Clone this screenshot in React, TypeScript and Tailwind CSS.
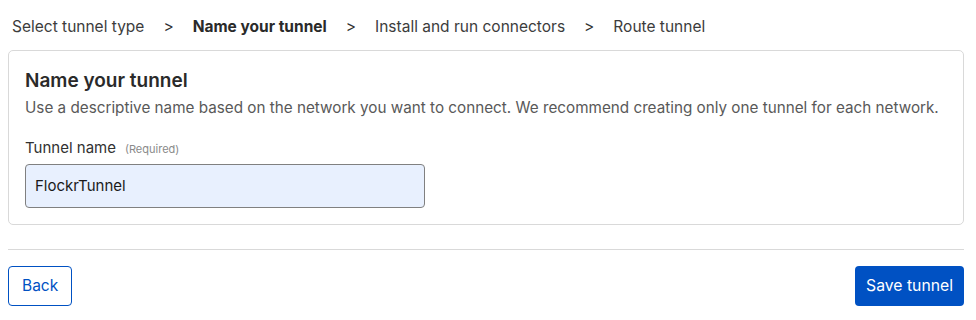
export default function App() {
  const steps = [
    { label: 'Select tunnel type', active: false },
    { label: 'Name your tunnel', active: true },
    { label: 'Install and run connectors', active: false },
    { label: 'Route tunnel', active: false },
  ];

  return (
    <div className="w-[976px] h-[320px] bg-white text-[#313131] font-['Inter',sans-serif] px-2 overflow-hidden">
      {/* Steps */}
      <nav className="flex items-center h-[50px] pl-1 pt-[3px] text-[15.5px]">
        {steps.map((step, i) => (
          <div key={step.label} className="flex items-center">
            {i > 0 && <span className="px-[19px] text-[#313131]">&gt;</span>}
            <span className={step.active ? 'font-bold text-[#2a2a2a]' : 'text-[#3c3c3c]'}>{step.label}</span>
          </div>
        ))}
      </nav>

      {/* Card */}
      <section className="w-[956px] border border-[#d9d9d9] rounded-[5px] px-4 pt-[17px] pb-[16px]">
        <h2 className="text-[19px] font-semibold leading-[26px] text-[#2a2a2a]">Name your tunnel</h2>
        <p className="text-[15.25px] leading-[22px] text-[#595959] mt-[3px]">
          Use a descriptive name based on the network you want to connect. We recommend creating only one tunnel for each network.
        </p>

        <label className="flex items-baseline gap-[9px] mt-[18px]">
          <span className="text-[15px] text-[#313131]">Tunnel name</span>
          <span className="text-[11px] text-[#8a8a8a]">(Required)</span>
        </label>
        <input
          defaultValue="FlockrTunnel"
          className="mt-[4px] w-[400px] h-[44px] bg-[#e8f0fe] border border-[#808080] rounded-[4px] px-[9px] text-[15px] text-[#1a1a1a] outline-none"
        />
      </section>

      <div className="w-[956px] h-px bg-[#d9d9d9] mt-[24px]" />

      <div className="w-[956px] flex justify-between mt-[16px]">
        <button className="h-[40px] px-[13px] border border-[#0051c3] rounded-[4px] text-[#0051c3] text-[15.5px]">
          Back
        </button>
        <button className="h-[40px] px-[11px] bg-[#0051c3] rounded-[4px] text-white text-[15.75px]">
          Save tunnel
        </button>
      </div>
    </div>
  );
}
